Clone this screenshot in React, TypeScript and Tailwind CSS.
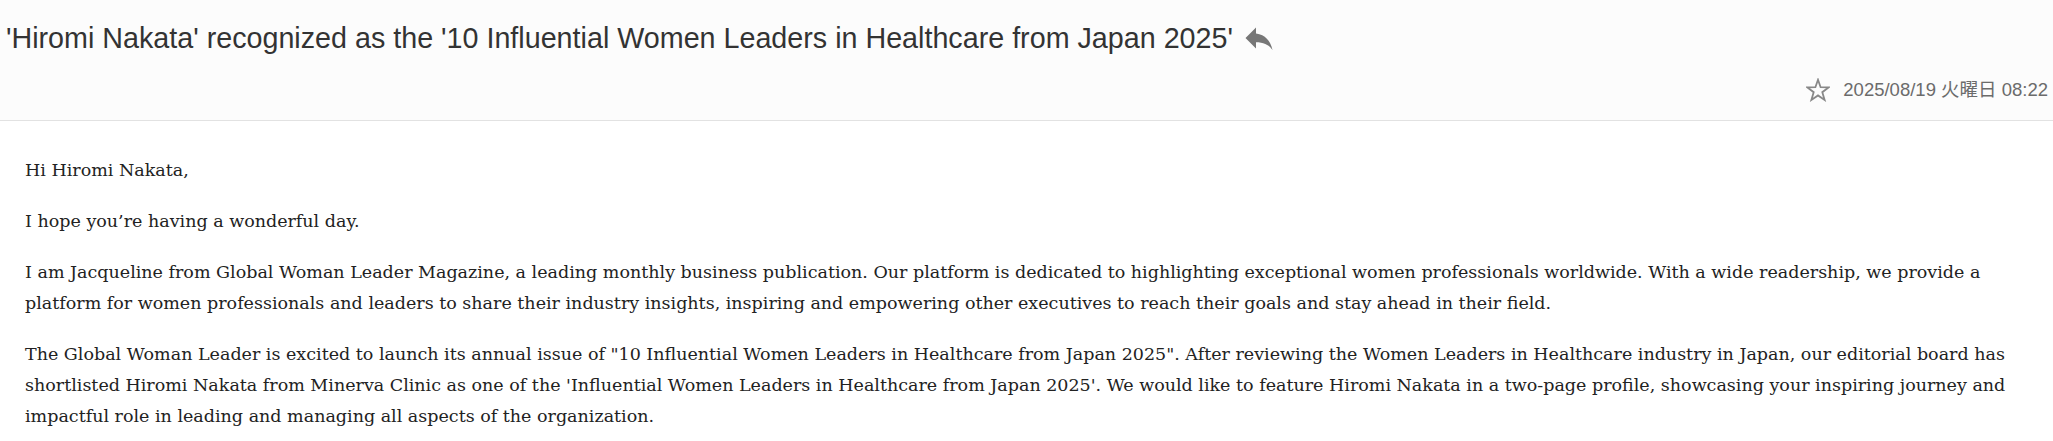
import { MdReply } from "react-icons/md";

export default function App() {
  return (
    <div className="min-h-screen bg-white font-['Liberation_Sans',Arial,sans-serif]">
      {/* Header */}
      <header className="bg-[#fcfcfc] border-b border-[#e2e2e2] pl-[6px] pr-[5px] pt-[20px] pb-[18px]">
        <div className="flex items-center">
          <h1 className="text-[28.7px] leading-[32px] font-normal text-[#333] whitespace-nowrap">
            'Hiromi Nakata' recognized as the '10 Influential Women Leaders in Healthcare from Japan 2025'
          </h1>
          <MdReply className="ml-[8px] text-[#777]" size={36} />
        </div>

        <div className="mt-[22px] flex items-center justify-end">
          <StarOutline />
          <span className="ml-[13px] text-[18.5px] leading-[24px] text-[#6b6b6b] font-['Liberation_Sans','Noto_Sans_CJK_JP',sans-serif]">
            2025/08/19 火曜日 08:22
          </span>
        </div>
      </header>

      {/* Body */}
      <div className="pl-[25px] pr-[20px] pt-[34px] font-['DejaVu_Serif',Georgia,serif] text-[17.5px] leading-[31px] text-[#222] space-y-[20px]">
        <p>Hi Hiromi Nakata,</p>
        <p>I hope you’re having a wonderful day.</p>
        <p className="whitespace-nowrap">
          I am Jacqueline from Global Woman Leader Magazine, a leading monthly business publication. Our platform is dedicated to highlighting exceptional women professionals worldwide. With a wide readership, we provide a
          <br />
          platform for women professionals and leaders to share their industry insights, inspiring and empowering other executives to reach their goals and stay ahead in their field.
        </p>
        <p className="whitespace-nowrap">
          The Global Woman Leader is excited to launch its annual issue of "10 Influential Women Leaders in Healthcare from Japan 2025". After reviewing the Women Leaders in Healthcare industry in Japan, our editorial board has
          <br />
          shortlisted Hiromi Nakata from Minerva Clinic as one of the 'Influential Women Leaders in Healthcare from Japan 2025'. We would like to feature Hiromi Nakata in a two-page profile, showcasing your inspiring journey and
          <br />
          impactful role in leading and managing all aspects of the organization.
        </p>
      </div>
    </div>
  );
}

function StarOutline() {
  return (
    <svg width="24" height="24" viewBox="0 0 24 24" className="text-[#888]">
      <polygon
        points="12,1.8 14.6,9.2 22.6,9.4 16.3,14.2 18.6,21.9 12,17.4 5.4,21.9 7.7,14.2 1.4,9.4 9.4,9.2"
        fill="none"
        stroke="currentColor"
        strokeWidth="1.8"
        strokeLinejoin="miter"
      />
    </svg>
  );
}
